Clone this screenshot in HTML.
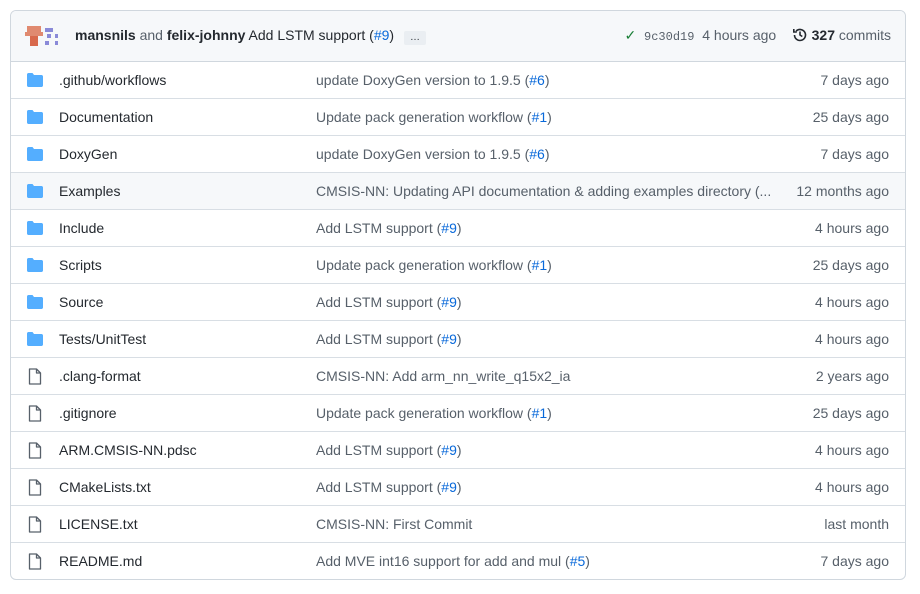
<!DOCTYPE html>
<html><head><style>
body{margin:0;background:#fff;font-family:"Liberation Sans",sans-serif;font-size:14px;color:#24292f}
.box{position:absolute;left:10px;top:10px;width:894px;height:568px;border:1px solid #d0d7de;border-radius:6px;overflow:hidden}
.hd{height:50px;background:#f6f8fa;border-bottom:1px solid #d0d7de;position:relative}
.row{height:36px;border-top:1px solid #d8dee4;position:relative}
.hd + .row{border-top:none;height:36px}
.row div{position:absolute;top:0;line-height:36px;white-space:nowrap}
.n{left:48px}.m{left:305px;color:#57606a}.d{right:16px;color:#57606a}
.row .ic{left:16px;top:10px;line-height:0}
.ic svg{display:block}
a{color:#0969da}
.hl{background:#f6f8fa}
</style></head><body>
<div class="box">
<div class="hd">
<svg style="position:absolute;left:14px;top:13px" width="34" height="24"><rect x="2" y="2" width="14" height="6" fill="#e08a70"/><rect x="0" y="8" width="18" height="4" fill="#e08a70"/><rect x="5" y="12" width="8" height="10" fill="#d8694c"/><rect x="20" y="4" width="8" height="4" fill="#8a8ad8"/><rect x="22" y="10" width="4" height="4" fill="#8a8ad8"/><rect x="30" y="10" width="3" height="4" fill="#8a8ad8"/><rect x="20" y="17" width="4" height="4" fill="#8a8ad8"/><rect x="30" y="17" width="3" height="4" fill="#8a8ad8"/></svg>
<div style="position:absolute;left:64px;top:0;line-height:48px"><b>mansnils</b> <span style="color:#57606a">and</span> <b>felix-johnny</b> Add LSTM support (<a>#9</a>) <span style="display:inline-block;background:#eaeef2;font-size:10px;padding:0 6px;line-height:14px;margin-left:6px;border-radius:2px">…</span></div>
<div style="position:absolute;right:14px;top:0;line-height:48px;color:#57606a"><span style="color:#1a7f37">✓</span>&nbsp; <span style="font-family:'Liberation Mono',monospace;font-size:12px">9c30d19</span>&nbsp; 4 hours ago &nbsp;&nbsp; <svg width="16" height="16" viewBox="0 0 16 16" style="vertical-align:-3px"><path d="M2.5 8a5.5 5.5 0 1 0 1.6-3.9M1.8 2v3h3M8 4.5V8l2.3 1.5" stroke="#24292f" stroke-width="1.6" fill="none"/></svg> <b style="color:#24292f">327</b> commits</div>
</div>
</div>
<script>
const R=[["d",".github/workflows","update DoxyGen version to 1.9.5 (","#6","7 days ago"],
["d","Documentation","Update pack generation workflow (","#1","25 days ago"],
["d","DoxyGen","update DoxyGen version to 1.9.5 (","#6","7 days ago"],
["d","Examples","CMSIS-NN: Updating API documentation &amp; adding examples directory (...","","12 months ago",1],
["d","Include","Add LSTM support (","#9","4 hours ago"],
["d","Scripts","Update pack generation workflow (","#1","25 days ago"],
["d","Source","Add LSTM support (","#9","4 hours ago"],
["d","Tests/UnitTest","Add LSTM support (","#9","4 hours ago"],
["f",".clang-format","CMSIS-NN: Add arm_nn_write_q15x2_ia","","2 years ago"],
["f",".gitignore","Update pack generation workflow (","#1","25 days ago"],
["f","ARM.CMSIS-NN.pdsc","Add LSTM support (","#9","4 hours ago"],
["f","CMakeLists.txt","Add LSTM support (","#9","4 hours ago"],
["f","LICENSE.txt","CMSIS-NN: First Commit","","last month"],
["f","README.md","Add MVE int16 support for add and mul (","#5","7 days ago"]];
let h="";
const fo='<svg width="16" height="16" viewBox="0 0 16 16"><path d="M0 2.5C0 1.7.7 1 1.5 1h4l1.5 2h7.5c.8 0 1.5.7 1.5 1.5v9c0 .8-.7 1.5-1.5 1.5h-13C.7 15 0 14.3 0 13.5z" fill="#54aeff"/></svg>';
const fi='<svg width="16" height="17" viewBox="0 0 16 17"><path d="M2.5 1h7l4 4v11h-11z M9.5 1v4h4" fill="none" stroke="#57606a" stroke-width="1.3" stroke-linejoin="round"/></svg>';
for(const r of R){const m=r[3]?r[2]+'<a>'+r[3]+'</a>)':r[2];
h+=`<div class="row${r[5]?' hl':''}"><div class="ic">${r[0]=='d'?fo:fi}</div><div class="n">${r[1]}</div><div class="m">${m}</div><div class="d">${r[4]}</div></div>`;}
document.querySelector('.box').insertAdjacentHTML('beforeend',h);
</script>
</body></html>
